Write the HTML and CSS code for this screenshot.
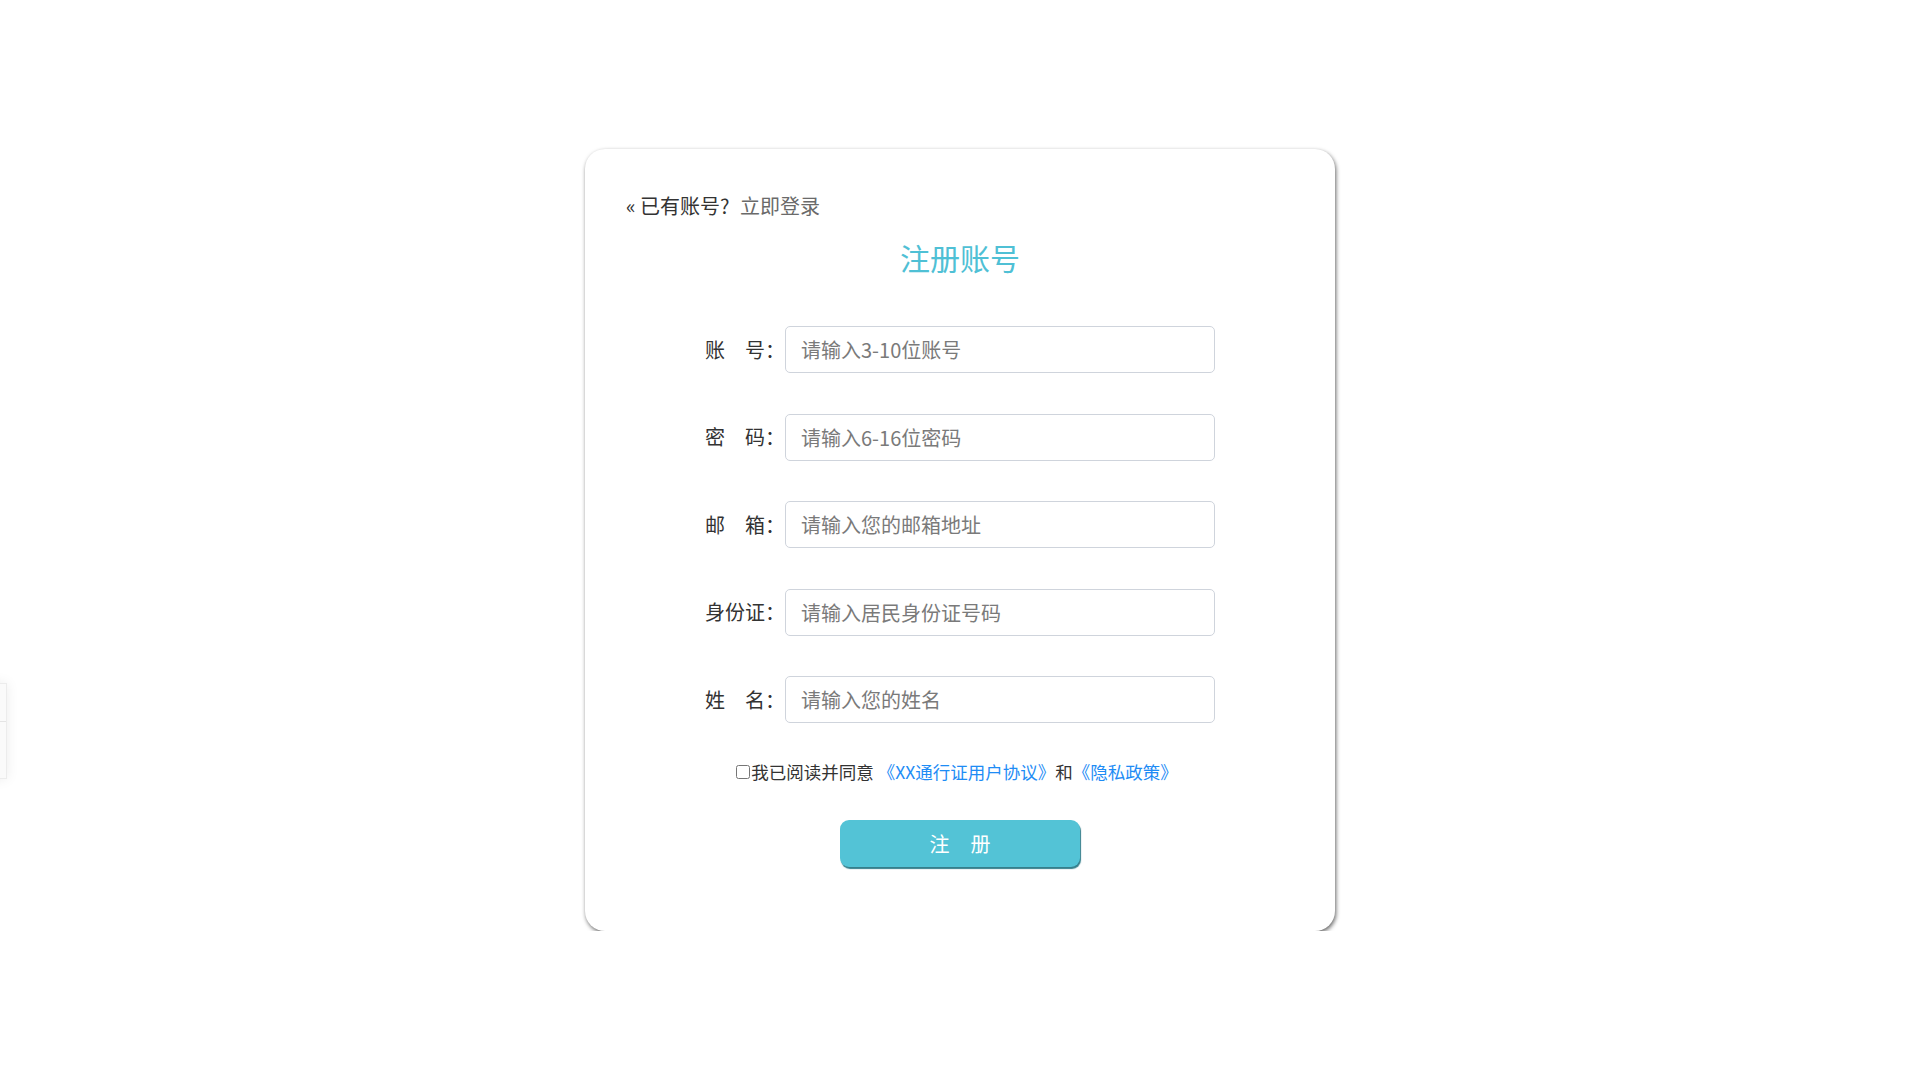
FILE: index.html
```html
<!DOCTYPE html>
<html lang="zh-CN">
<head>
<meta charset="utf-8">
<title>注册账号</title>
<link rel="stylesheet" href="styles.css">
</head>
<body>
<div class="side-tab">
  <div class="side-tab-top"></div>
  <div class="side-tab-bottom"></div>
</div>
<main class="page">
  <section class="card">
    <div class="back">« 已有账号? <a class="back-link" href="#">立即登录</a></div>
    <h1 class="title">注册账号</h1>
    <form class="form">
      <div class="row">
        <label class="label">账　号：</label>
        <input class="field" type="text" placeholder="请输入3-10位账号">
      </div>
      <div class="row">
        <label class="label">密　码：</label>
        <input class="field" type="password" placeholder="请输入6-16位密码">
      </div>
      <div class="row">
        <label class="label">邮　箱：</label>
        <input class="field" type="text" placeholder="请输入您的邮箱地址">
      </div>
      <div class="row">
        <label class="label">身份证：</label>
        <input class="field" type="text" placeholder="请输入居民身份证号码">
      </div>
      <div class="row">
        <label class="label">姓　名：</label>
        <input class="field" type="text" placeholder="请输入您的姓名">
      </div>
      <div class="agree">
        <input class="check" type="checkbox"><span>我已阅读并同意 <a class="link" href="#">《XX通行证用户协议》</a>和<a class="link" href="#">《隐私政策》</a></span>
      </div>
      <div class="actions">
        <button class="submit" type="button"><span>注</span><span>册</span></button>
      </div>
    </form>
  </section>
</main>
</body>
</html>
```

FILE: styles.css
```css
html, body {
  margin: 0;
  padding: 0;
  background: #ffffff;
}

body {
  font-family: "Noto Sans CJK SC", "Noto Sans", sans-serif;
  color: #333333;
}

.side-tab {
  position: fixed;
  left: -40px;
  top: 683px;
  width: 47px;
  height: 96px;
  background: #fafafa;
  border: 1px solid #ececec;
  box-sizing: border-box;
  box-shadow: 0 0 12px rgba(0, 0, 0, 0.08);
  display: flex;
  flex-direction: column;
}

.side-tab-top {
  height: 37px;
  border-bottom: 1px solid #e4e4e4;
}

.side-tab-bottom {
  flex: 1;
}

.page {
  display: flex;
  justify-content: center;
  padding-top: 149px;
}

.card {
  width: 750px;
  height: 782px;
  box-sizing: border-box;
  border-radius: 20px;
  background: #ffffff;
  box-shadow: 1px 2px 4px rgba(0, 0, 0, 0.6);
  padding: 43px 41px 0;
}

.back {
  font-size: 20px;
  line-height: 28px;
  height: 28px;
  color: #333333;
}

.back-link {
  color: #6a6a6a;
  text-decoration: none;
  margin-left: 6px;
}

.title {
  margin: 17px 0 0;
  text-align: center;
  font-size: 30px;
  line-height: 40px;
  font-weight: normal;
  color: #4fc0d5;
}

.form {
  margin-top: 49px;
  display: flex;
  flex-direction: column;
  gap: 40.5px;
}

.row {
  display: flex;
  justify-content: center;
  align-items: center;
  height: 47px;
}

.label {
  width: 80px;
  font-size: 20px;
  line-height: 28px;
  color: #333333;
  white-space: nowrap;
}

.field {
  width: 430px;
  height: 47px;
  box-sizing: border-box;
  border: 1px solid #cfd4dc;
  border-radius: 5px;
  padding: 0 15px;
  font-family: "Noto Sans CJK SC", "Noto Sans", sans-serif;
  font-size: 20px;
  color: #333333;
  outline: none;
  background: #ffffff;
}

.field::placeholder {
  color: #7a7a7a;
}

.agree {
  margin-top: -3.5px;
  display: flex;
  justify-content: center;
  align-items: center;
  font-size: 17.5px;
  line-height: 24px;
  color: #333333;
  padding-right: 6px;
}

.check {
  width: 14px;
  height: 14px;
  margin: 0 1px 0 0;
}

.link {
  color: #1e8cf5;
  text-decoration: none;
}

.actions {
  display: flex;
  justify-content: center;
  margin-top: -4.5px;
}

.submit {
  width: 240px;
  height: 47px;
  border: none;
  border-radius: 9px;
  background: #53c3d6;
  box-shadow: 1px 2px 1px #357f8c;
  color: #ffffff;
  font-family: "Noto Sans CJK SC", "Noto Sans", sans-serif;
  font-size: 20px;
  display: flex;
  justify-content: center;
  align-items: center;
  gap: 21px;
  padding: 0;
}
```
